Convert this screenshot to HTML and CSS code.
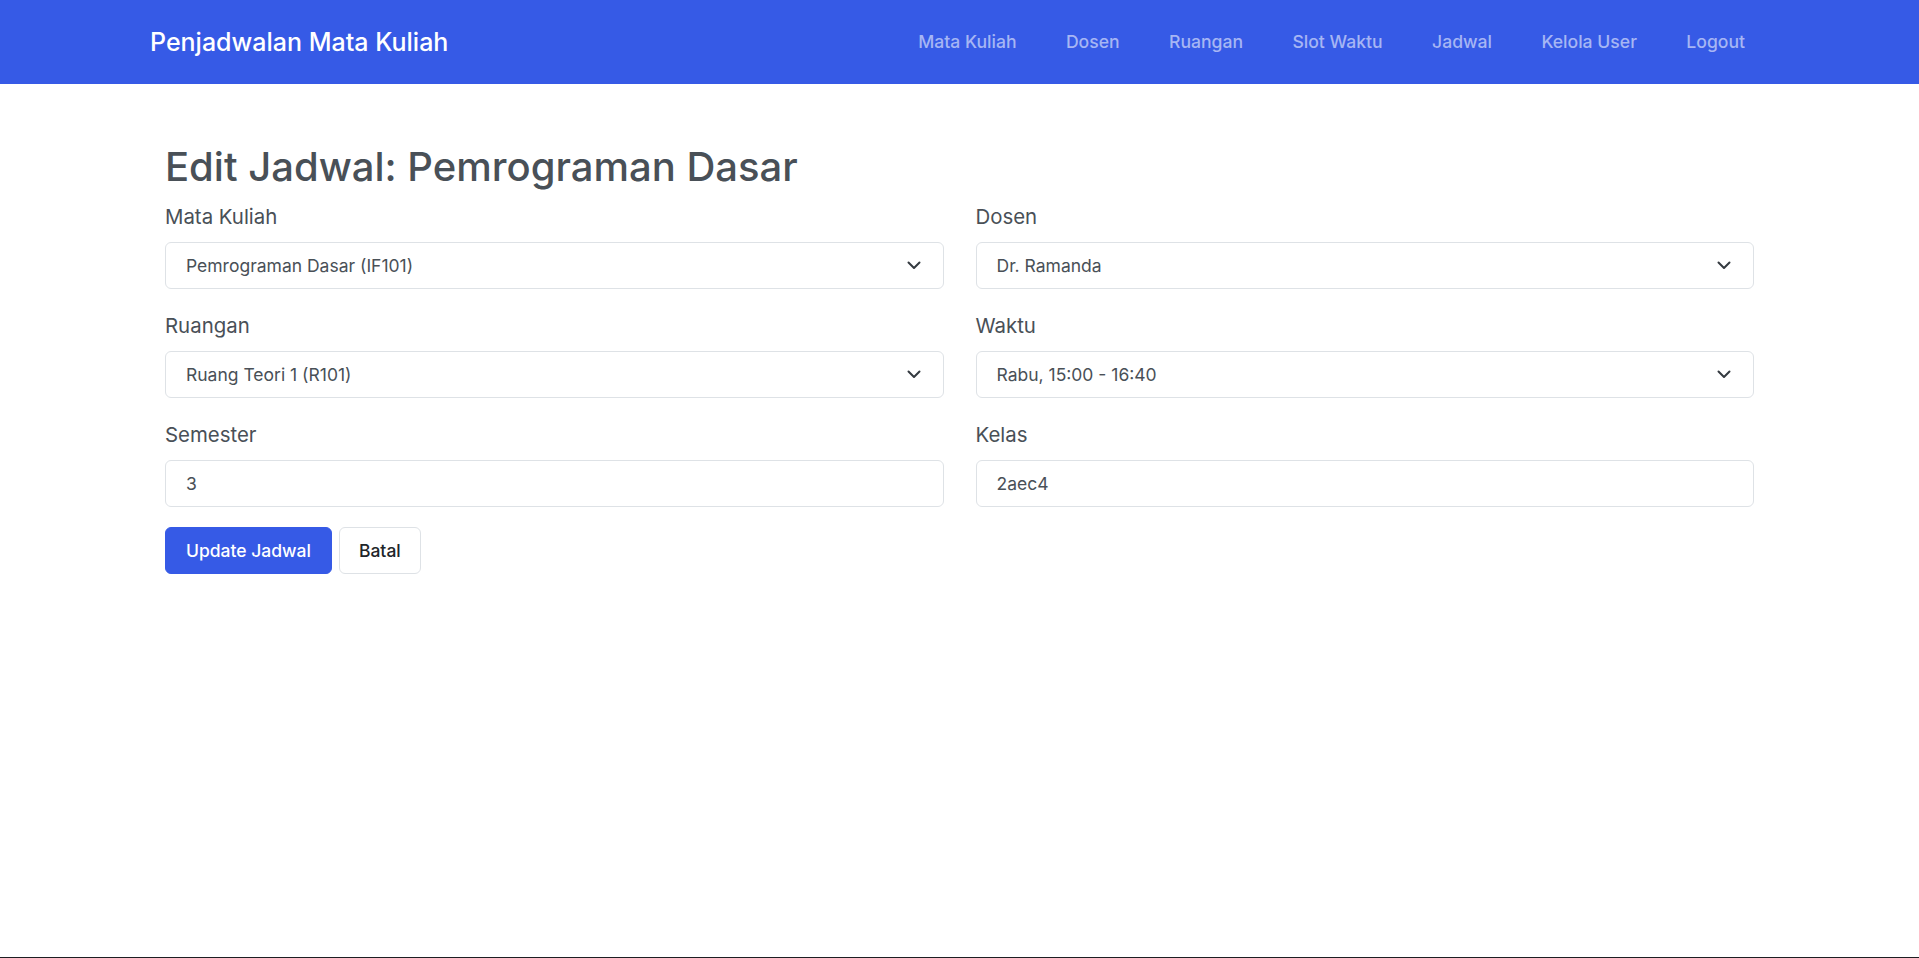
FILE: index.html
```html
<!DOCTYPE html>
<html lang="id">
<head>
<meta charset="utf-8">
<title>Edit Jadwal</title>
<link rel="stylesheet" href="styles.css">
</head>
<body>
<nav class="navbar">
  <div class="nav-inner">
    <a class="brand" href="#">Penjadwalan Mata Kuliah</a>
    <ul class="nav-links">
      <li><a href="#">Mata Kuliah</a></li>
      <li><a href="#">Dosen</a></li>
      <li><a href="#">Ruangan</a></li>
      <li><a href="#">Slot Waktu</a></li>
      <li><a href="#">Jadwal</a></li>
      <li><a href="#">Kelola User</a></li>
      <li><a href="#">Logout</a></li>
    </ul>
  </div>
</nav>
<main class="main">
  <h1 class="title">Edit Jadwal: Pemrograman Dasar</h1>
  <form class="form">
    <div class="grid">
      <div class="field">
        <label class="label">Mata Kuliah</label>
        <div class="select-wrap">
          <select class="control"><option>Pemrograman Dasar (IF101)</option></select>
          <svg class="chev" width="14" height="9" viewBox="0 0 14 9"><path d="M1.5 1.5l5.5 5.5 5.5-5.5" fill="none" stroke="#343a40" stroke-width="2" stroke-linecap="round" stroke-linejoin="round"/></svg>
        </div>
      </div>
      <div class="field">
        <label class="label">Dosen</label>
        <div class="select-wrap">
          <select class="control"><option>Dr. Ramanda</option></select>
          <svg class="chev" width="14" height="9" viewBox="0 0 14 9"><path d="M1.5 1.5l5.5 5.5 5.5-5.5" fill="none" stroke="#343a40" stroke-width="2" stroke-linecap="round" stroke-linejoin="round"/></svg>
        </div>
      </div>
      <div class="field">
        <label class="label">Ruangan</label>
        <div class="select-wrap">
          <select class="control"><option>Ruang Teori 1 (R101)</option></select>
          <svg class="chev" width="14" height="9" viewBox="0 0 14 9"><path d="M1.5 1.5l5.5 5.5 5.5-5.5" fill="none" stroke="#343a40" stroke-width="2" stroke-linecap="round" stroke-linejoin="round"/></svg>
        </div>
      </div>
      <div class="field">
        <label class="label">Waktu</label>
        <div class="select-wrap">
          <select class="control"><option>Rabu, 15:00 - 16:40</option></select>
          <svg class="chev" width="14" height="9" viewBox="0 0 14 9"><path d="M1.5 1.5l5.5 5.5 5.5-5.5" fill="none" stroke="#343a40" stroke-width="2" stroke-linecap="round" stroke-linejoin="round"/></svg>
        </div>
      </div>
      <div class="field">
        <label class="label">Semester</label>
        <input class="control" type="text" value="3">
      </div>
      <div class="field">
        <label class="label">Kelas</label>
        <input class="control" type="text" value="2aec4">
      </div>
    </div>
    <div class="actions">
      <button type="button" class="btn btn-primary">Update Jadwal</button>
      <button type="button" class="btn btn-light">Batal</button>
    </div>
  </form>
</main>
<div class="edge"></div>
</body>
</html>
```

FILE: styles.css
```css
* { box-sizing: border-box; }
html, body { height: 100%; }
body {
  margin: 0;
  font-family: Inter, "Noto Sans", sans-serif;
  color: #495057;
  background: #fff;
  display: flex;
  flex-direction: column;
  min-height: 100vh;
}
.navbar {
  background: #365ae6;
  height: 84px;
  flex: none;
}
.nav-inner {
  max-width: 1619px;
  margin: 0 auto;
  height: 100%;
  display: flex;
  align-items: center;
  justify-content: space-between;
}
.brand {
  color: #fff;
  text-decoration: none;
  font-size: 25px;
  font-weight: 500;
  line-height: 1.2;
}
.nav-links {
  list-style: none;
  margin: 0;
  padding: 0;
  display: flex;
}
.nav-links a {
  display: block;
  padding: 8px 24.7px;
  color: rgba(255, 255, 255, 0.56);
  text-decoration: none;
  font-size: 17.6px;
  font-weight: 500;
  line-height: 1.5;
}
.nav-links li:last-child a { padding-right: 24px; }
.main {
  flex: 1;
  width: 100%;
  max-width: 1589px;
  margin: 0 auto;
  padding-top: 59px;
}
.title {
  margin: 0 0 11px;
  font-size: 40px;
  font-weight: 500;
  line-height: 1.2;
  color: #495057;
}
.grid {
  display: grid;
  grid-template-columns: 1fr 1fr;
  column-gap: 32px;
  row-gap: 22px;
}
.field { display: flex; flex-direction: column; }
.label {
  font-size: 20.4px;
  line-height: 30px;
  margin-bottom: 10px;
  color: #495057;
}
.select-wrap { position: relative; }
.control {
  width: 100%;
  height: 47px;
  border: 1px solid #dee2e6;
  border-radius: 6px;
  background: #fff;
  padding: 0 50px 0 20px;
  font-family: Inter, "Noto Sans", sans-serif;
  font-size: 17.5px;
  color: #495057;
  appearance: none;
  -webkit-appearance: none;
  outline: none;
}
.chev {
  position: absolute;
  right: 23px;
  top: 19px;
  pointer-events: none;
}
.actions {
  margin-top: 20px;
  display: flex;
  gap: 7px;
}
.btn {
  height: 47px;
  border-radius: 6px;
  font-family: Inter, "Noto Sans", sans-serif;
  font-size: 17.5px;
  font-weight: 500;
  cursor: pointer;
}
.btn-primary {
  background: #365ae6;
  border: 1px solid #365ae6;
  color: #fff;
  padding: 0 20px;
}
.btn-light {
  background: #fff;
  border: 1px solid #dee2e6;
  color: #212529;
  padding: 0 19px;
}
.edge {
  flex: none;
  height: 1px;
  background: #1e1e22;
}
```
